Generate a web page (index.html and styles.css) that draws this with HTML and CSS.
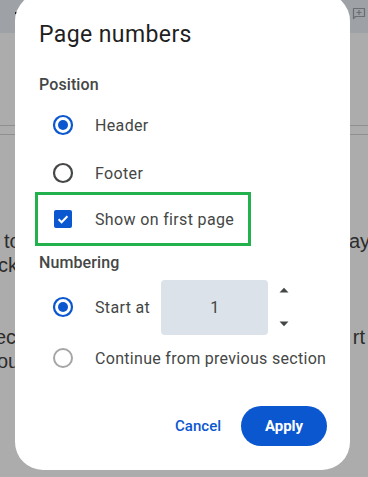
FILE: index.html
```html
<!DOCTYPE html>
<html>
<head>
<meta charset="utf-8">
<link rel="stylesheet" href="styles.css">
</head>
<body>
<div class="screen">
  <div class="doc">
    <div class="toolbar">
      <span class="tb-mark"></span>
      <svg class="comment-icon" width="16" height="16" viewBox="0 0 16 16">
        <path d="M2.5 2.5h11v8h-9l-2 2z" fill="none" stroke="#6b6e72" stroke-width="1.2" stroke-linejoin="round"/>
        <path d="M8 4v5M5.5 6.5h5" stroke="#6b6e72" stroke-width="1.2"/>
      </svg>
    </div>
    <div class="ruler"></div>
    <div class="doc-text">
      <div class="doc-line"><span class="frag l-to">to</span><span class="frag r-ay">ay</span></div>
      <div class="doc-line"><span class="frag l-ck">ck</span></div>
      <div class="doc-line"></div>
      <div class="doc-line"></div>
      <div class="doc-line"><span class="frag l-ect">ect</span><span class="frag r-rt">rt</span></div>
      <div class="doc-line"><span class="frag l-ou">ou</span></div>
    </div>
  </div>

  <div class="dialog">
    <div class="title">Page numbers</div>

    <div class="section-label first">Position</div>
    <div class="option">
      <span class="ctl">
        <svg width="22" height="22" viewBox="0 0 22 22"><circle cx="11" cy="11" r="9" fill="none" stroke="#0b57d0" stroke-width="2.2"/><circle cx="11" cy="11" r="5" fill="#0b57d0"/></svg>
      </span>
      <span class="opt-label">Header</span>
    </div>
    <div class="option">
      <span class="ctl">
        <svg width="22" height="22" viewBox="0 0 22 22"><circle cx="11" cy="11" r="9" fill="none" stroke="#444746" stroke-width="2.2"/></svg>
      </span>
      <span class="opt-label">Footer</span>
    </div>
    <div class="option check-row">
      <span class="ctl">
        <svg width="18" height="18" viewBox="0 0 18 18"><rect x="0" y="0" width="18" height="18" rx="2" fill="#0b57d0"/><path d="M4.6 9.2l3 3 5.8-6" fill="none" stroke="#fff" stroke-width="2"/></svg>
      </span>
      <span class="opt-label">Show on first page</span>
    </div>

    <div class="section-label second">Numbering</div>
    <div class="option start-row">
      <span class="ctl">
        <svg width="22" height="22" viewBox="0 0 22 22"><circle cx="11" cy="11" r="9" fill="none" stroke="#0b57d0" stroke-width="2.2"/><circle cx="11" cy="11" r="5" fill="#0b57d0"/></svg>
      </span>
      <span class="opt-label">Start at</span>
      <span class="num-input">1</span>
      <span class="spinner">
        <svg width="10" height="6" viewBox="0 0 10 6"><path d="M0.5 5.5L5 0.8 9.5 5.5z" fill="#444746"/></svg>
        <svg width="10" height="6" viewBox="0 0 10 6"><path d="M0.5 0.5L5 5.2 9.5 0.5z" fill="#444746"/></svg>
      </span>
    </div>
    <div class="option continue-row">
      <span class="ctl">
        <svg width="22" height="22" viewBox="0 0 22 22"><circle cx="11" cy="11" r="9" fill="none" stroke="#a6a6a6" stroke-width="2"/></svg>
      </span>
      <span class="opt-label">Continue from previous section</span>
    </div>

    <div class="actions">
      <button class="btn-text">Cancel</button>
      <button class="btn-filled">Apply</button>
    </div>
  </div>
</div>
</body>
</html>
```
FILE: styles.css
```css
html, body {
  margin: 0;
  padding: 0;
}
body {
  width: 368px;
  height: 477px;
  overflow: hidden;
  background: #acacac;
}
.screen {
  position: relative;
  width: 368px;
  height: 477px;
  overflow: hidden;
}
.doc {
  width: 368px;
  height: 477px;
  background: #acacac;
}
.toolbar {
  height: 33px;
  background: #9ea2a7;
  display: flex;
  align-items: flex-start;
  justify-content: space-between;
}
.tb-mark {
  display: block;
  width: 3px;
  height: 2px;
  margin: 12px 0 0 15px;
  background: #222;
}
.comment-icon {
  display: block;
  margin: 6px 1px 0 0;
}
.ruler {
  margin-top: 92px;
  height: 8px;
  border-top: 1px solid #8f8f8f;
  border-bottom: 1px solid #8f8f8f;
}
.doc-text {
  padding-top: 94px;
  font-family: "Liberation Sans", Arial, sans-serif;
  font-size: 20px;
  color: #2c2c2c;
}
.doc-line {
  height: 24px;
  line-height: 24px;
  display: flex;
  justify-content: space-between;
}
.l-to { margin-left: 4px; }
.l-ck { margin-left: -2px; }
.l-ect { margin-left: -5px; }
.l-ou { margin-left: -3px; }
.r-ay { margin-right: -2px; }
.r-rt { margin-right: 3px; }

.dialog {
  position: absolute;
  left: 15px;
  top: -7px;
  width: 335px;
  height: 477px;
  box-sizing: border-box;
  padding: 28px 23px 0 24px;
  background: #fff;
  border-radius: 28px;
  font-family: Roboto, "Noto Sans", sans-serif;
  display: flex;
  flex-direction: column;
}
.title {
  font-size: 23px;
  line-height: 28px;
  letter-spacing: 0.4px;
  color: #1f1f1f;
  font-weight: 400;
}
.section-label {
  font-size: 16px;
  line-height: 20px;
  letter-spacing: 0.1px;
  color: #444746;
  font-weight: 500;
}
.section-label.first { margin-top: 26px; }
.section-label.second { margin-top: 7px; }
.option {
  display: flex;
  align-items: center;
  height: 48px;
}
.section-label.first + .option { margin-top: 6px; }
.ctl {
  width: 48px;
  height: 48px;
  display: flex;
  align-items: center;
  justify-content: center;
  flex: none;
}
.ctl svg { display: block; }
.opt-label {
  margin-left: 8px;
  font-size: 16px;
  letter-spacing: 0.35px;
  color: #444746;
  white-space: nowrap;
  flex: none;
}
.check-row {
  margin-top: -5px;
  margin-left: -4px;
  width: 216px;
  height: 54px;
  box-sizing: border-box;
  border: 3px solid #22b14c;
  padding-left: 1px;
}
.start-row {
  margin-top: 6px;
  height: 56px;
}
.num-input {
  margin-left: 11px;
  width: 107px;
  height: 55px;
  background: #dce2e9;
  border-radius: 4px;
  display: flex;
  align-items: center;
  justify-content: center;
  font-size: 16px;
  color: #444746;
  flex: none;
}
.spinner {
  margin-left: 11px;
  height: 40px;
  display: flex;
  flex-direction: column;
  justify-content: space-between;
  align-items: center;
}
.spinner svg { display: block; }
.continue-row {
  height: 46px;
}
.continue-row .opt-label {
  letter-spacing: 0.3px;
}
.actions {
  margin-top: 25px;
  display: flex;
  justify-content: flex-end;
  align-items: center;
  gap: 8px;
}
.btn-text, .btn-filled {
  font-family: Roboto, "Noto Sans", sans-serif;
  font-size: 15px;
  border: none;
  cursor: pointer;
  height: 40px;
  padding: 0;
}
.btn-text {
  background: transparent;
  color: #0b57d0;
  font-weight: 500;
  padding: 0 12px;
}
.btn-filled {
  width: 86px;
  border-radius: 20px;
  background: #0b57d0;
  color: #fff;
  font-weight: 700;
}
```
